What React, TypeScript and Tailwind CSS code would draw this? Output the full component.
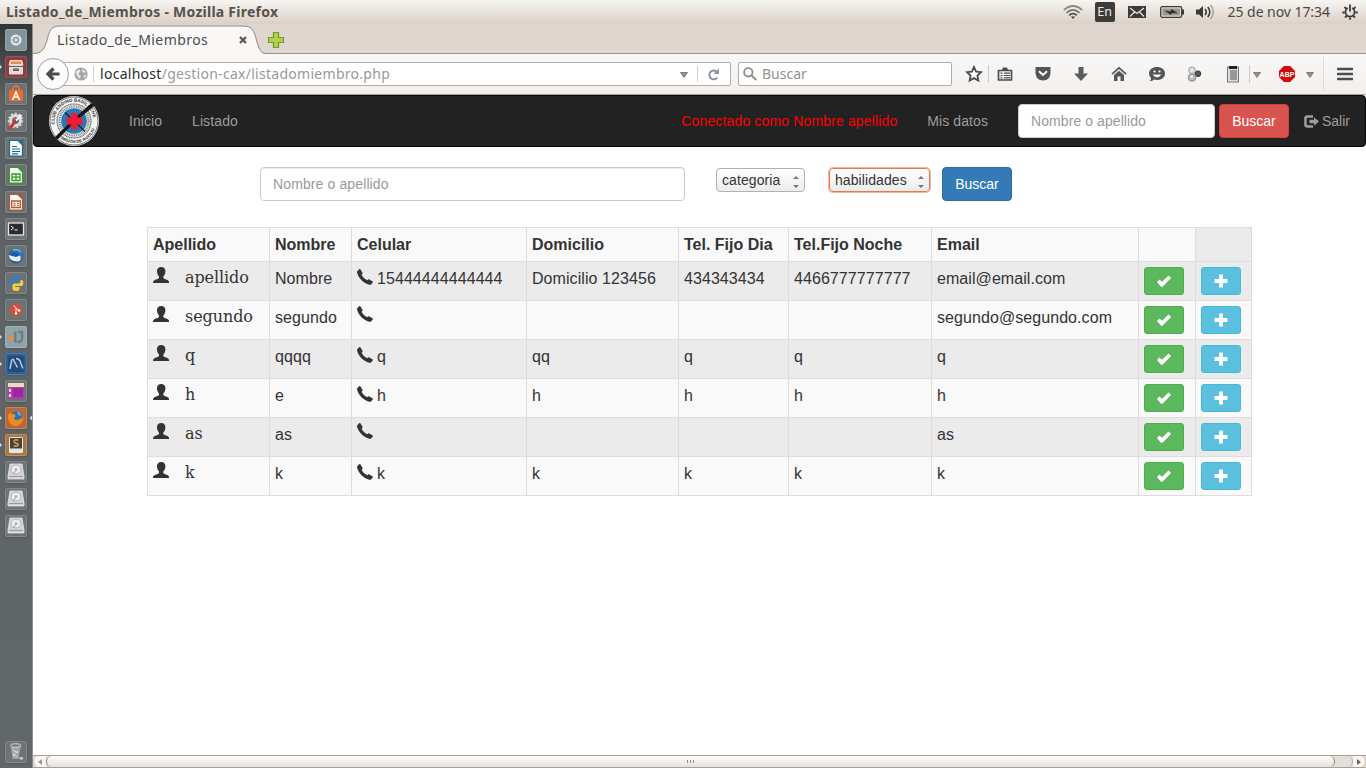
import React from "react";

type Member = {
  apellido: string;
  nombre: string;
  celular: string;
  domicilio: string;
  dia: string;
  noche: string;
  email: string;
};

const members: Member[] = [
  { apellido: "apellido", nombre: "Nombre", celular: "15444444444444", domicilio: "Domicilio 123456", dia: "434343434", noche: "4466777777777", email: "email@email.com" },
  { apellido: "segundo", nombre: "segundo", celular: "", domicilio: "", dia: "", noche: "", email: "segundo@segundo.com" },
  { apellido: "q", nombre: "qqqq", celular: "q", domicilio: "qq", dia: "q", noche: "q", email: "q" },
  { apellido: "h", nombre: "e", celular: "h", domicilio: "h", dia: "h", noche: "h", email: "h" },
  { apellido: "as", nombre: "as", celular: "", domicilio: "", dia: "", noche: "", email: "as" },
  { apellido: "k", nombre: "k", celular: "k", domicilio: "k", dia: "k", noche: "k", email: "k" },
];

/* ---------- glyphs used in the page ---------- */

const UserGlyph = () => (
  <svg viewBox="0 0 16 16" className="block h-4 w-4 shrink-0" fill="#333">
    <path d="M8.200 0C5.300 0 3.900 1.800 4 4.500C4.100 6.600 4.900 8.500 6 9.500V11C5.600 11.700 4.500 12 3 12.600C1.200 13.300 0 13.900 0 16H16.200C16.200 13.900 15 13.300 13.200 12.600C11.700 12 10.700 11.700 10.300 11V9.500C11.500 8.500 12.300 6.600 12.400 4.500C12.500 1.800 11.100 0 8.200 0Z" />
  </svg>
);

const PhoneGlyph = () => (
  <svg viewBox="0 0 16 16" className="block h-4 w-4 shrink-0" fill="#333">
    <path d="M0.300 2.200L2.200 0.300C2.700 -0.100 3.200 0 3.500 0.500L5.500 3.800C5.700 4.200 5.600 4.600 5.300 4.900L4.600 5.700C5.300 7.600 8.100 10.400 10.300 11.200L11.100 10.500C11.400 10.200 11.900 10.200 12.300 10.400L15.400 12.200C15.900 12.500 16 13 15.700 13.500L14.200 15.300C13.700 15.900 13.100 16 12.300 15.800C6.600 14.100 1.500 9 0.100 3.700C-0.100 3.100 -0.100 2.600 0.300 2.200Z" />
  </svg>
);

const OkGlyph = () => (
  <svg viewBox="0 0 16 14" className="block h-[14px] w-4" fill="#fff">
    <path d="M1 8L3.400 5.600L6 7.800L12.500 1.500L15.100 4.100L6.500 12.700L5 12.700Z" />
  </svg>
);

const PlusGlyph = () => (
  <svg viewBox="0 0 14 14" className="block h-[14px] w-[14px]" fill="#fff">
    <path d="M5.500 0.500H8.500Q9 0.500 9 1V5H13Q13.500 5 13.500 5.500V8.500Q13.500 9 13 9H9V13Q9 13.500 8.500 13.500H5.500Q5 13.500 5 13V9H1Q0.500 9 0.500 8.500V5.500Q0.500 5 1 5H5V1Q5 0.500 5.500 0.500Z" />
  </svg>
);

const LogoutGlyph = () => (
  <svg viewBox="0 0 15 13" className="block h-[13px] w-[15px]" fill="#9d9d9d">
    <path d="M3.500 0.200H9V2.700H4Q2.700 2.700 2.700 4V9Q2.700 10.300 4 10.300H9V12.800H3.500Q0.200 12.800 0.200 9.500V3.500Q0.200 0.200 3.500 0.200Z" />
    <path d="M10 2.300L15 6.500L10 10.700V8.300H5.500V4.700H10Z" />
  </svg>
);

const ClubLogo = () => (
  <svg viewBox="0 0 50 50" className="block h-[50px] w-[50px]">
    <defs>
      <path id="ringTop" d="M7.300 33A19.400 19.400 0 1 1 42.700 33" />
      <path id="ringBottom" d="M5 34.500A22.300 22.300 0 0 0 46.500 31" />
    </defs>
    <circle cx="25" cy="25" r="25" fill="#f6f6f6" />
    <circle cx="25" cy="25" r="24" fill="none" stroke="#444" strokeWidth="0.700" />
    <text className="font-['Liberation_Sans'] text-[4.600px] font-bold" fill="#333">
      <textPath href="#ringTop" startOffset="5">CLUB ANDINO BARILOCHE</textPath>
    </text>
    <text className="font-['Liberation_Sans'] text-[4.200px] font-bold" fill="#333">
      <textPath href="#ringBottom" startOffset="5">COMISION DE AUXILIO</textPath>
    </text>
    <circle cx="25" cy="25" r="17" fill="#e4e4e4" stroke="#555" strokeWidth="1.200" strokeDasharray="1 0.600" />
    <circle cx="25" cy="25" r="14.500" fill="none" stroke="#777" strokeWidth="2" strokeDasharray="0.800 1" />
    <circle cx="25" cy="25" r="12.800" fill="#2879b8" />
    <path d="M16 16.500L36 35.500" stroke="#171717" strokeWidth="1.100" />
    <path d="M5.800 41.200L8.200 43.800L26 26L45.500 9.800L42.500 7L24 23.500Z" fill="#171717" />
    <path d="M22 17H28.500V21.500H33.500V28.500H28.500V33.500H22V28.500H17.500V21.500H22Z" fill="#ed1c35" />
  </svg>
);

/* ---------- system launcher ---------- */

const tileClass: Record<string, string> = {
  grey: "bg-[#6d7375] border-[#82888a]",
  light: "bg-[#84949c] border-[#98a6ad]",
  red: "bg-[#8c3c48] border-[#a0505a]",
  slate: "bg-[#90a3a6] border-[#a3b3b5]",
  blue: "bg-[#2d5f96] border-[#4a7bb0]",
  orange: "bg-[#b2693c] border-[#c68455]",
  brown: "bg-[#a87840] border-[#bc9058]",
};

const Doc = ({ color, kind }: { color: string; kind: "text" | "grid" | "slide" }) => (
  <>
    <path d="M4.500 3.500H13L17.500 8V19H4.500Z" fill="#fafafa" stroke={color} strokeWidth="1.200" />
    <path d="M13 3H18.500V8.500Z" fill={color} opacity="0.800" />
    {kind === "text" && <path d="M7 9.500H12M7 12H15M7 14.500H15M7 16.800H13" stroke={color} strokeWidth="1.200" />}
    {kind === "grid" && <path d="M7 10H15V16.500H7ZM7 13.200H15M11 10V16.500" stroke={color} strokeWidth="1.300" fill="none" />}
    {kind === "slide" && <path d="M6.700 10H15.300V16.500H6.700ZM8.500 12.300H10.500M8.500 14.300H10.500M12 12.300H13.700M12 14.300H13.700" stroke={color} strokeWidth="1.300" fill="none" />}
  </>
);

const Disk = () => (
  <>
    <path d="M5 3H17L19 15V18H3V15Z" fill="#d3d3d3" stroke="#eee" strokeWidth="0.700" />
    <ellipse cx="11" cy="8.500" rx="5" ry="4.500" fill="#ededed" stroke="#aaa" strokeWidth="0.800" />
    <circle cx="11" cy="8.500" r="1.300" fill="#aaa" />
    <path d="M8 13L11 9.500" stroke="#999" />
    <path d="M4 15.500H18" stroke="#999" />
  </>
);

type LauncherItem = { tone: string; art: React.ReactNode; running?: boolean; focused?: boolean };

const launcher: LauncherItem[] = [
  { tone: "light", art: (<><circle cx="11" cy="11" r="5.500" fill="#e6ebed" /><circle cx="11" cy="11" r="2.600" fill="none" stroke="#84949c" strokeWidth="1.300" /><path d="M11 11L5 11M11 11L14 6M11 11L14 16" stroke="#84949c" strokeWidth="0.500" /></>) },
  { tone: "red", running: true, art: (<><path d="M5 4H17L18.500 9H3.500Z" fill="#e3e0d8" /><path d="M6 5.500H16V8H6Z" fill="#ef8a3c" /><rect x="4" y="9" width="14" height="9.500" rx="1" fill="#dedbd2" /><path d="M4 10.500H18" stroke="#6b6259" /><rect x="8" y="12.500" width="6" height="2.500" fill="#71695f" /></>) },
  { tone: "grey", art: (<><path d="M4 7H18V18H4Z" fill="#ee6a2e" /><path d="M8 7Q8 3 11 3Q14 3 14 7" stroke="#ee7a3e" strokeWidth="1.500" fill="none" /><path d="M7.500 17L11 9L14.500 17M8.500 14H13.500" stroke="#fff" strokeWidth="1.500" fill="none" /></>) },
  { tone: "grey", art: (<><circle cx="10.500" cy="10.500" r="5" fill="none" stroke="#ddd" strokeWidth="3" /><circle cx="10.500" cy="10.500" r="7" fill="none" stroke="#ddd" strokeWidth="1.500" strokeDasharray="2 2" /><path d="M5 18L11 10.500" stroke="#c33" strokeWidth="3" strokeLinecap="round" /><path d="M11 10.500L16.500 5" stroke="#f5f5f5" strokeWidth="2" /></>) },
  { tone: "grey", art: <Doc color="#1b6a9c" kind="text" /> },
  { tone: "grey", art: <Doc color="#2f9e22" kind="grid" /> },
  { tone: "grey", art: <Doc color="#b0562a" kind="slide" /> },
  { tone: "grey", art: (<><rect x="3.500" y="5" width="15" height="12" fill="#2a2d2e" stroke="#e3e3e3" strokeWidth="1.300" /><path d="M6 8L8.500 10L6 12M9.500 12H12.500" stroke="#fff" fill="none" /></>) },
  { tone: "grey", art: (<><circle cx="11" cy="11" r="7.500" fill="#245a9c" /><path d="M3.500 10L11 12L17 9.500L15 16Q9 17.500 5 14Z" fill="#e9eef2" /><path d="M6 5Q13 1 18 7Q20 13 15.500 17Q17 11 13 8.500Q9 6 5 9Z" fill="#2f74b8" /><path d="M8 5Q13 3.500 16 7" stroke="#78b6e4" strokeWidth="1.500" fill="none" /></>) },
  { tone: "grey", art: (<><path d="M11 3C7 3 7.500 5 7.500 7H12V8H5.500C3 8 3 14 5.500 14H7.500V12Q7.500 10.500 9.500 10.500H13Q14.500 10.500 14.500 9V5.500Q14.500 3 11 3Z" fill="#3d7db5" /><path d="M11 19C15 19 14.500 17 14.500 15H10V14H16.500C19 14 19 8 16.500 8H15.500V10Q15 11.500 13 11.500H9.500Q7.500 11.500 7.500 13.500V16.500Q7.500 19 11 19Z" fill="#f5cf3f" /></>) },
  { tone: "grey", art: (<><path d="M11 3.500L18.500 11L11 18.500L3.500 11Z" fill="#de4c36" /><path d="M8.500 6.500L11 9V14.500M11 9L14 11.500" stroke="#fff" strokeWidth="1" fill="none" /><circle cx="11" cy="14.500" r="1.200" fill="#fff" /><circle cx="14" cy="11.500" r="1.200" fill="#fff" /></>) },
  { tone: "slate", running: true, art: (<><path d="M10.300 5.500V16.500M13 6H17V12Q17 16 12.500 16" stroke="#687f88" strokeWidth="2.500" fill="none" /><circle cx="6.300" cy="11.500" r="2.600" fill="#ef8b3b" /></>) },
  { tone: "blue", running: true, art: (<><rect x="3" y="3" width="16" height="16" rx="2" fill="#244b76" /><path d="M5 16L6.500 8Q8 4.500 9 8L12.500 14.500M11 5.500Q15.500 6 16 11L18 15.500" stroke="#b9ccda" strokeWidth="1.500" fill="none" /></>) },
  { tone: "grey", art: (<><rect x="3" y="3" width="16" height="16" fill="#b13cab" /><path d="M3 5H19" stroke="#eadfba" strokeWidth="4" /><path d="M5 9V18" stroke="#eadfe9" strokeWidth="2" strokeDasharray="3 2" /><path d="M8 8H18V17H8Z" fill="#a025a0" /></>) },
  { tone: "orange", running: true, focused: true, art: (<><circle cx="11" cy="11" r="8" fill="#e9681e" /><circle cx="11.500" cy="9.500" r="5.800" fill="#2d70b2" /><path d="M3 8Q5 5 7 7Q9 6 11 9Q9 10 9 12Q12 15 18 10Q17 19 10 19Q3 17 3 8Z" fill="#f28a23" /><path d="M12 4Q16 5 16 9L13 8Z" fill="#62aee0" /></>) },
  { tone: "brown", running: true, art: (<><rect x="4" y="3" width="14" height="16" rx="1.500" fill="#e5e5e5" /><rect x="5" y="4" width="12" height="10.500" fill="#444" /><path d="M13.500 6.200Q9 5 9 7.500Q9 8.700 11.500 9.200Q13.500 9.700 13 11.200Q12 12.500 8.700 11.700" stroke="#f2a43a" strokeWidth="1.400" fill="none" /></>) },
  { tone: "grey", art: <Disk /> },
  { tone: "grey", art: <Disk /> },
  { tone: "grey", art: <Disk /> },
];

const Tile = ({ item }: { item: LauncherItem }) => (
  <div className="flex h-[22px] w-[33px] shrink-0 items-center">
    <svg viewBox="0 0 5 8" className="h-2 w-[5px]">{item.running && <path d="M0 2L2 4L0 6Z" fill="#ddd" />}</svg>
    <div className={`h-[22px] w-[22px] rounded-[2px] border shadow-sm ${tileClass[item.tone]}`}>
      <svg viewBox="0 0 22 22" className="-m-px block h-[22px] w-[22px]">{item.art}</svg>
    </div>
    <svg viewBox="0 0 5 8" className="ml-[1px] h-2 w-[4px]">{item.focused && <path d="M5 1L2 4L5 7Z" fill="#ddd" />}</svg>
  </div>
);

const Launcher = () => (
  <aside className="flex w-[33px] shrink-0 flex-col justify-between border-r border-[#8f9090] bg-linear-to-b from-[#303536] via-[#5c6263] via-10% to-[#62686a] pt-[5px] pb-[5px]">
    <div className="flex flex-col gap-[5px]">
      {launcher.map((item, i) => (<Tile key={i} item={item} />))}
    </div>
    <Tile item={{ tone: "grey", art: (<><path d="M5.500 4L7.500 18H13.500L16 4Z" fill="#a0a5a6" /><ellipse cx="10.700" cy="4.500" rx="5.500" ry="1.800" fill="#777d7e" stroke="#d5d7d7" /><path d="M8 9L13 12M8 15L13 10M8 13L12 16" stroke="#ddd" /><path d="M14.500 16H18V18.500H14.500Z" fill="#ccc" /></>) }} />
  </aside>
);

/* ---------- desktop panel ---------- */

const TopPanel = () => (
  <header className="flex h-6 shrink-0 items-center justify-between bg-linear-to-b from-[#f7f5f2] to-[#dbd0c6] pr-[8px] pl-[6px] font-['Noto_Sans',sans-serif] text-[#4c4843]">
    <span className="text-[14px] leading-6 font-bold tracking-[0.250px] whitespace-nowrap text-[#56524d]">Listado_de_Miembros - Mozilla Firefox</span>
    <div className="flex items-center">
      <svg viewBox="0 0 20 14" className="mr-[12px] h-[14px] w-[20px]" fill="none" strokeWidth="1.700">
        <path d="M0.800 5Q10 -3 19.200 5" stroke="#8d8882" /><path d="M3.500 7.800Q10 2 16.500 7.800" stroke="#77736e" /><path d="M6.200 10.300Q10 7 13.800 10.300" stroke="#4c4843" /><path d="M8 11.500H12L10 14Z" fill="#3c3c3c" stroke="none" />
      </svg>
      <span className="mr-[13px] flex h-5 w-5 items-center justify-center rounded-[2px] bg-[#3c3b37] text-[12.500px] text-[#f2efea]">En</span>
      <svg viewBox="0 0 18 12" className="mr-[14px] h-3 w-[18px]">
        <rect width="18" height="12" fill="#3c3b39" /><path d="M2 2L9 7.500L16 2M2 10.500L6.500 6M16 10.500L11.500 6" stroke="#ece6df" strokeWidth="1.200" fill="none" />
      </svg>
      <svg viewBox="0 0 24 12" className="mr-[12px] h-3 w-6">
        <rect x="0.700" y="0.700" width="21" height="10.600" rx="1.500" fill="#e3dbd2" stroke="#3c3b39" strokeWidth="1.300" /><rect x="2.500" y="2.500" width="17.500" height="7" fill="#99948c" /><path d="M22 3.500H24V8.500H22Z" fill="#3c3b39" /><path d="M5.500 5L11 6L11.500 3.500L17 7L11.500 6.500L11 8.500Z" fill="#222" stroke="#222" strokeWidth="0.500" />
      </svg>
      <svg viewBox="0 0 20 16" className="mr-[12px] h-4 w-5">
        <path d="M0 5.500H3L7 2V14L3 10.500H0Z" fill="#3c3b39" /><path d="M9 5Q11.500 8 9 11M11.800 3Q15.800 8 11.800 13" stroke="#3c3b39" strokeWidth="1.600" fill="none" /><path d="M14.500 1Q20 8 14.500 15" stroke="#aaa49c" strokeWidth="1.600" fill="none" />
      </svg>
      <span className="mr-[12px] text-[14px] leading-6 tracking-[-0.050px] whitespace-nowrap">25 de nov 17:34</span>
      <svg viewBox="0 0 16 16" className="h-4 w-4" fill="none" stroke="#3c3b39">
        <path d="M5.800 4A4.600 4.600 0 1 0 10.200 4" strokeWidth="1.700" /><path d="M8 0.500V7.500" strokeWidth="1.800" /><path d="M2.500 3L4.200 4.700M13.500 3L11.800 4.700M0.300 8.500H2.700M15.700 8.500H13.300M3 13.500L4.500 12M13 13.500L11.500 12M8 15.700V13.500" strokeWidth="1.800" />
      </svg>
    </div>
  </header>
);

/* ---------- browser chrome ---------- */

const TabStrip = () => (
  <div className="relative flex h-[30px] shrink-0 items-center border-b border-[#999288] bg-[#dfd6d0] font-['Noto_Sans',sans-serif]">
    <svg viewBox="0 0 233 30" className="absolute top-0 left-0 h-[30px] w-[233px]">
      <path d="M0 29.500C8 29.500 11 26 13.500 18C16.500 6 18 2 29 2H208C219 2 221 6 224 18C226.500 26 228 29.500 233 29.500V30H0Z" fill="#f9f8f7" />
      <path d="M0 29.500C8 29.500 11 26 13.500 18C16.500 6 18 2 27 2H210C219 2 221 6 224 18C226.500 26 228 29.500 233 29.500" fill="none" stroke="#918a82" />
    </svg>
    <div className="relative flex items-center pt-[2px] pl-[24px]">
      <span className="w-[181px] text-[14px] leading-5 tracking-[0.420px] whitespace-nowrap text-[#4c4c4c]">Listado_de_Miembros</span>
      <svg viewBox="0 0 10 10" className="h-[10px] w-[10px]"><path d="M2 2L8 8M8 2L2 8" stroke="#5a5651" strokeWidth="2.200" /></svg>
      <svg viewBox="0 0 18 18" className="ml-[19px] h-[18px] w-[18px]"><path d="M6.500 1.500H11.500V6.500H16.500V11.500H11.500V16.500H6.500V11.500H1.500V6.500H6.500Z" fill="#b5d146" stroke="#6f9a2c" strokeWidth="1.200" /></svg>
    </div>
  </div>
);

const DropArrow = ({ className }: { className: string }) => (
  <svg viewBox="0 0 8 6" className={`h-[6px] w-2 shrink-0 ${className}`}><path d="M0.500 0.500H7.500L4 5.500Z" fill="#95928e" stroke="#6e6b67" strokeWidth="0.800" /></svg>
);

const Toolbar = () => (
  <div className="flex h-[41px] shrink-0 items-center border-b border-[#a9a39b] bg-linear-to-b from-[#f9f8f7] to-[#f2f0ee] font-['Noto_Sans',sans-serif] text-[14px]">
    <div className="z-10 ml-[4px] flex h-8 w-8 shrink-0 items-center justify-center rounded-full border border-[#9a9eaa] bg-[#fbfbfa]">
      <svg viewBox="0 0 16 16" className="h-4 w-4"><path d="M8.500 2.500L3 8L8.500 13.500M4 8H14.500" stroke="#4b4b4b" strokeWidth="3.200" fill="none" /></svg>
    </div>
    <div className="-ml-[8px] flex h-6 w-[670px] items-center rounded-r-[2px] border border-[#b5aca2] bg-white">
      <svg viewBox="0 0 14 14" className="ml-[12px] h-[14px] w-[14px]"><circle cx="7" cy="7" r="6.600" fill="#a5a5a5" /><path d="M1.500 5L5 2L6.500 4L4.500 7L7 9L5.500 12L3 9ZM8 1.500L12 4.500L10.500 6L8.500 5ZM10 8L12.500 7.500L11 11L9.500 10Z" fill="#e4e4e4" /></svg>
      <span className="mx-[6px] ml-[5px] h-4 w-px bg-[#d0d0d0]" />
      <span className="flex-1 leading-5 tracking-[0.280px] whitespace-nowrap text-[#999]"><span className="text-[#2c2c2c]">localhost</span>/gestion-cax/listadomiembro.php</span>
      <DropArrow className="mt-[2px]" />
      <span className="ml-[9px] h-4 w-px bg-[#d0d0d0]" />
      <svg viewBox="0 0 13 13" className="mr-[10px] ml-[9px] h-[13px] w-[13px]"><path d="M9.500 3.500A4.400 4.400 0 1 0 10.300 9.500" stroke="#8495a8" strokeWidth="2" fill="none" /><path d="M12 0.500V6H6.500Z" fill="#8495a8" /></svg>
    </div>
    <div className="ml-[7px] flex h-6 w-[214px] items-center rounded-[2px] border border-[#b5aca2] bg-white">
      <svg viewBox="0 0 14 14" className="ml-[4px] h-[14px] w-[14px]"><circle cx="5.300" cy="5.300" r="4.200" stroke="#8e8e8e" strokeWidth="1.800" fill="none" /><path d="M8.500 8.500L13.300 13" stroke="#8e8e8e" strokeWidth="2" /></svg>
      <span className="ml-[5px] leading-5 text-[#959089]">Buscar</span>
    </div>
    <svg viewBox="0 0 18 18" className="ml-[13px] h-[18px] w-[18px] shrink-0"><path d="M9 2L11.100 6.600L16 7.200L12.400 10.600L13.300 15.600L9 13.100L4.700 15.600L5.600 10.600L2 7.200L6.900 6.600Z" fill="#fff" stroke="#4c4c4c" strokeWidth="1.800" /></svg>
    <span className="ml-[5px] h-[18px] w-px bg-[#cfcbc6]" />
    <svg viewBox="0 0 16 16" className="ml-[8px] h-4 w-4 shrink-0"><path d="M1.500 4.500H14.500V14H1.500Z" fill="none" stroke="#4c4c4c" strokeWidth="1.700" strokeLinejoin="round" /><path d="M5 4L6 1.500H10L11 4Z" fill="#4c4c4c" /><path d="M3.500 7.200H5.500M7 7.200H13M3.500 9.500H5.500M7 9.500H13M3.500 11.800H5.500M7 11.800H13" stroke="#4c4c4c" strokeWidth="1.200" /></svg>
    <svg viewBox="0 0 16 16" className="ml-[22px] h-4 w-4 shrink-0"><path d="M0.500 1H15.500V7.500Q14.500 14.500 8 14.500Q1.500 14.500 0.500 7.500Z" fill="#555" /><path d="M4 5.300L8 9L12 5.300" stroke="#fff" strokeWidth="2" fill="none" /></svg>
    <svg viewBox="0 0 16 16" className="ml-[22px] h-4 w-4 shrink-0"><path d="M5.500 1H10.500V7.500H15L8 15L1 7.500H5.500Z" fill="#5c5c5c" /></svg>
    <svg viewBox="0 0 16 16" className="ml-[22px] h-4 w-4 shrink-0"><path d="M1 8.200L8 1.800L15 8.200" fill="none" stroke="#555" strokeWidth="1.700" /><path d="M3 9L8 4.700L13 9V15H9.500V10.500H6.500V15H3Z" fill="#555" /></svg>
    <svg viewBox="0 0 18 16" className="ml-[21px] h-4 w-[18px] shrink-0"><path d="M9 1C13.500 1 17 3.500 17 7.500S13.500 14 9 14Q7.500 14 6 13.600Q4 15.500 1.500 15Q3.300 13.500 3 12Q1 10.300 1 7.500C1 3.500 4.500 1 9 1Z" fill="#555" /><path d="M4.500 8.500Q9 14 13.500 8.500Z" fill="#fff" /><circle cx="6.500" cy="5.500" r="1.100" fill="#fff" /><circle cx="11.500" cy="5.500" r="1.100" fill="#fff" /></svg>
    <svg viewBox="0 0 16 16" className="ml-[20px] h-4 w-4 shrink-0"><circle cx="6" cy="4.300" r="3.300" fill="#e2e2e2" stroke="#999" /><circle cx="12" cy="7.700" r="2.800" fill="#555" stroke="#333" /><circle cx="6" cy="11.500" r="3.700" fill="#bbb" stroke="#888" /><circle cx="5.500" cy="10.500" r="1.500" fill="#eee" /></svg>
    <svg viewBox="0 0 16 18" className="ml-[23px] h-[18px] w-4 shrink-0"><rect x="2.500" y="2" width="11" height="15" fill="#ddd" stroke="#777" /><path d="M4 2.500H12" stroke="#222" strokeWidth="3" /><path d="M5 6H12M5 8H12M5 10H12M5 12H12M5 14H12" stroke="#555" strokeWidth="1.200" /></svg>
    <span className="ml-[8px] h-[18px] w-px bg-[#cfcbc6]" />
    <DropArrow className="mt-[2px] ml-[3px]" />
    <svg viewBox="0 0 16 16" className="ml-[18px] h-4 w-4 shrink-0"><path d="M4.900 0H11.100L16 4.900V11.100L11.100 16H4.900L0 11.100V4.900Z" fill="#d00b0b" /><text x="8" y="10.600" textAnchor="middle" fill="#fff" className="font-['Liberation_Sans'] text-[7px] font-bold">ABP</text></svg>
    <DropArrow className="mt-[2px] ml-[11px]" />
    <span className="ml-[9px] h-[34px] w-px bg-[#dedad6]" />
    <svg viewBox="0 0 16 14" className="ml-[13px] h-[14px] w-4 shrink-0"><path d="M1 2H15M1 7H15M1 12H15" stroke="#4c4c4c" strokeWidth="2.600" strokeLinecap="round" /></svg>
  </div>
);

/* ---------- page ---------- */

const Navbar = () => (
  <nav className="flex h-[52px] shrink-0 items-center rounded-[4px] border border-[#080808] bg-[#222] pl-[15px] text-[14px] leading-5 text-[#9d9d9d]">
    <ClubLogo />
    <a className="ml-[30px] tracking-[0.050px]">Inicio</a>
    <a className="ml-[30px] tracking-[0.120px]">Listado</a>
    <div className="ml-auto flex items-center pr-[15px]">
      <span className="tracking-[0.145px] text-[#f00]">Conectado como Nombre apellido</span>
      <a className="ml-[30px] tracking-[0.080px]">Mis datos</a>
      <div className="ml-[30px] flex h-[34px] w-[197px] items-center rounded-[4px] border border-[#ccc] bg-white pl-[12px] tracking-[0.080px] text-[#999]">Nombre o apellido</div>
      <button className="ml-[4px] flex h-[34px] w-[70px] items-center justify-center rounded-[4px] border border-[#d43f3a] bg-[#d9534f] text-white">Buscar</button>
      <a className="ml-[15px] flex items-center gap-[3px]"><LogoutGlyph />Salir</a>
    </div>
  </nav>
);

const SelectBox = ({ label, className }: { label: string; className: string }) => (
  <div className={`flex items-center justify-between rounded-[4px] border bg-linear-to-b from-white to-[#ececec] pr-[4px] pl-[5px] text-[14px] leading-5 tracking-[0.080px] text-[#333] ${className}`}>
    {label}
    <svg viewBox="0 0 8 14" className="mt-[3px] h-[14px] w-2" fill="#777"><path d="M1 4L4 1L7 4ZM1 10L4 13L7 10Z" /></svg>
  </div>
);

const FilterForm = () => (
  <div className="mt-5 flex h-[34px] shrink-0 items-start pl-[227px] text-[14px] leading-5">
    <div className="flex h-[34px] w-[425px] items-center rounded-[4px] border border-[#ccc] bg-white pl-[12px] tracking-[0.120px] text-[#999] shadow-[inset_0_1px_1px_rgba(0,0,0,0.075)]">Nombre o apellido</div>
    <SelectBox label="categoria" className="mt-[1px] ml-[31px] h-[24px] w-[89px] border-[#b4b0ac]" />
    <SelectBox label="habilidades" className="mt-[1px] ml-[24px] h-[24px] w-[101px] border-[#e37b52] shadow-[0_0_0_1px_#f4b79e]" />
    <button className="ml-[12px] flex h-[34px] w-[70px] items-center justify-center rounded-[4px] border border-[#2e6da4] bg-[#337ab7] text-white">Buscar</button>
  </div>
);

const cell = "border-r border-b border-[#ddd] p-0 pl-[5px] pt-[5px] align-top whitespace-nowrap";

const MemberTable = () => (
  <table className="mt-[26px] ml-[114px] w-[1105px] shrink-0 table-fixed border-separate border-spacing-0 border-t border-l border-[#ddd] text-[16px] leading-[23px] text-[#333]">
    <colgroup>
      <col className="w-[122px]" />
      <col className="w-[82px]" />
      <col className="w-[175px]" />
      <col className="w-[152px]" />
      <col className="w-[110px]" />
      <col className="w-[143px]" />
      <col className="w-[207px]" />
      <col className="w-[57px]" />
      <col className="w-[56px]" />
    </colgroup>
    <thead>
      <tr className="h-[34px] bg-[#f9f9f9] text-left font-bold">
        {["Apellido", "Nombre", "Celular", "Domicilio", "Tel. Fijo Dia", "Tel.Fijo Noche", "Email", ""].map((h, i) => (
          <th key={i} className={cell}>{h}</th>
        ))}
        <th className={`${cell} bg-[#ebebeb]`} />
      </tr>
    </thead>
    <tbody className="tracking-[0.070px]">
      {members.map((m) => (
        <tr key={m.apellido} className="h-[39px] odd:bg-[#ebebeb] even:bg-[#f9f9f9]">
          <td className={cell}>
            <div className="flex items-start font-['DejaVu_Serif',serif] tracking-[-0.080px]"><span className="mt-0"><UserGlyph /></span><span className="-mt-px ml-4">{m.apellido}</span></div>
          </td>
          <td className={cell}>{m.nombre}</td>
          <td className={cell}>
            <div className="flex items-start gap-1"><span className={m.celular ? "mt-[2px]" : "mt-0"}><PhoneGlyph /></span>{m.celular}</div>
          </td>
          <td className={cell}>{m.domicilio}</td>
          <td className={cell}>{m.dia}</td>
          <td className={cell}>{m.noche}</td>
          <td className={cell}>{m.email}</td>
          <td className={cell}><button className="flex h-7 w-10 items-center justify-center rounded-[3px] border border-[#4cae4c] bg-[#5cb85c]"><OkGlyph /></button></td>
          <td className={cell}><button className="flex h-7 w-10 items-center justify-center rounded-[3px] border border-[#46b8da] bg-[#5bc0de]"><PlusGlyph /></button></td>
        </tr>
      ))}
    </tbody>
  </table>
);

const Scrollbar = () => (
  <div className="mt-auto flex h-[13px] shrink-0 items-stretch border-y border-[#aaa096] bg-[#e5dfd9]">
    <div className="flex w-[13px] items-center justify-center rounded-l-full border-l border-[#c5b8ab] bg-[#f8f6f4]"><svg viewBox="0 0 4 6" className="h-[6px] w-1"><path d="M4 0V6L0 3Z" fill="#999" /></svg></div>
    <div className="flex w-[1289px] items-center justify-center gap-[2px] rounded-full border-x border-[#8f8378] bg-linear-to-b from-[#fdfdfc] to-[#e6e2de]">
      <span className="h-[3px] w-px bg-[#8f8983]" /><span className="h-[3px] w-px bg-[#8f8983]" /><span className="h-[3px] w-px bg-[#8f8983]" />
    </div>
    <div className="w-[18px] rounded-r-full border-r border-[#b9afa5]" />
    <div className="flex flex-1 items-center justify-center rounded-r-full border-r border-[#c5b8ab] bg-[#f8f6f4]"><svg viewBox="0 0 4 6" className="h-[6px] w-1"><path d="M0 0V6L4 3Z" fill="#666" /></svg></div>
  </div>
);

export default function App() {
  return (
    <div className="flex h-[768px] w-[1366px] flex-col overflow-hidden bg-white font-['Liberation_Sans',Arial,sans-serif]">
      <TopPanel />
      <div className="flex min-h-0 flex-1">
        <Launcher />
        <main className="flex min-w-0 flex-1 flex-col">
          <TabStrip />
          <Toolbar />
          <Navbar />
          <FilterForm />
          <MemberTable />
          <Scrollbar />
        </main>
      </div>
    </div>
  );
}
